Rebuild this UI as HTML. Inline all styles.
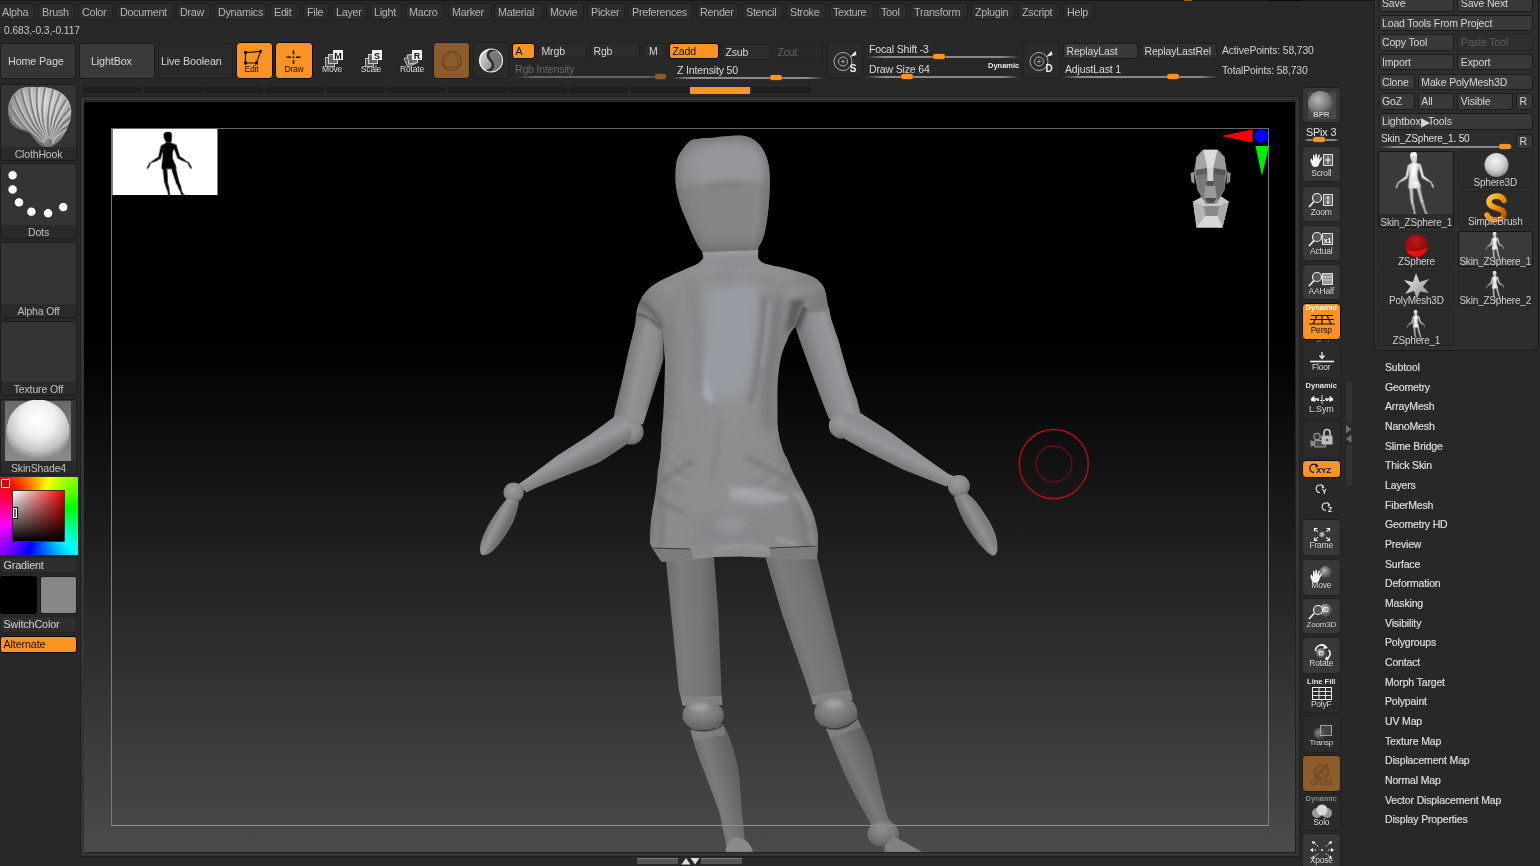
<!DOCTYPE html>
<html><head><meta charset="utf-8"><title>ZBrush</title>
<style>
*{box-sizing:border-box;margin:0;padding:0}
html,body{width:1540px;height:866px;overflow:hidden;background:#282828}
body{position:relative;font-family:"Liberation Sans",sans-serif;font-size:10.5px;letter-spacing:-0.15px;color:#c8c8c8;line-height:1;will-change:transform}
.a{position:absolute;white-space:nowrap}
.mi{position:absolute;top:3px;height:17px;border:1px solid #1f1f1f;border-radius:4px;background:#2c2c2c;color:#b4b4b4;font-size:10.8px;line-height:17px;padding-left:3px;letter-spacing:-0.3px;white-space:nowrap;overflow:hidden}
.btn{position:absolute;border:1px solid #1b1b1b;border-radius:3px;background:#393939;color:#d6d6d6;white-space:nowrap;overflow:hidden;padding-left:2.5px}
.sl{position:absolute;height:1.6px;margin-top:-1px;background:linear-gradient(90deg,rgba(150,150,150,0),#8a8a8a 12%,#8a8a8a 88%,rgba(150,150,150,0))}
.kn{position:absolute;height:5px;border-radius:2.5px;background:#fb9424;box-shadow:0 0 0 0.5px #6a4414;margin-top:-0.2px}
.tb{position:absolute;left:1302px;width:38.5px;height:35px;border:1px solid #202020;border-radius:4px;background:#383838}
.tl{position:absolute;left:0;width:100%;text-align:center;font-size:8.5px;color:#e4e4e4;letter-spacing:-0.2px;text-shadow:0 0 1px #000}
.sm{position:absolute;left:1385px;color:#e2e2e2;font-size:10.5px;white-space:nowrap;-webkit-text-stroke:0.2px #cfcfcf}
.lp{position:absolute;left:0;width:77px;border:1px solid #1c1c1c;border-radius:3px;background:#343434;overflow:hidden}
.lpl{position:absolute;left:0;bottom:0;width:100%;height:13px;background:#2a2a2a;color:#c0c0c0;text-align:center;font-size:10.5px;line-height:14px}
.tt{position:absolute;background:#2b2b2b;border:1px solid #262626;border-radius:3px}
.ttl{position:absolute;left:-4px;right:-4px;bottom:-1.5px;text-align:center;font-size:10px;color:#cfcfcf;line-height:12px;letter-spacing:-0.2px}
.or{background:#fb9424 !important;color:#111;border-color:#0c0c0c}
.dor{background:#8c5c2b !important;border-color:#1b1b1b}
</style></head><body>

<div class="mi" style="left:-2px;width:37px">Alpha</div>
<div class="mi" style="left:38px;width:37px">Brush</div>
<div class="mi" style="left:78px;width:35px">Color</div>
<div class="mi" style="left:116px;width:58px">Document</div>
<div class="mi" style="left:176px;width:35px">Draw</div>
<div class="mi" style="left:214px;width:53px">Dynamics</div>
<div class="mi" style="left:270px;width:30px">Edit</div>
<div class="mi" style="left:303px;width:26px">File</div>
<div class="mi" style="left:332px;width:35px">Layer</div>
<div class="mi" style="left:370px;width:32px">Light</div>
<div class="mi" style="left:405px;width:39px">Macro</div>
<div class="mi" style="left:448px;width:44px">Marker</div>
<div class="mi" style="left:494px;width:49px">Material</div>
<div class="mi" style="left:546px;width:38px">Movie</div>
<div class="mi" style="left:587px;width:38px">Picker</div>
<div class="mi" style="left:628px;width:65px">Preferences</div>
<div class="mi" style="left:696px;width:43px">Render</div>
<div class="mi" style="left:742px;width:41px">Stencil</div>
<div class="mi" style="left:786px;width:40px">Stroke</div>
<div class="mi" style="left:829px;width:45px">Texture</div>
<div class="mi" style="left:877px;width:30px">Tool</div>
<div class="mi" style="left:910px;width:58px">Transform</div>
<div class="mi" style="left:971px;width:44px">Zplugin</div>
<div class="mi" style="left:1018px;width:42px">Zscript</div>
<div class="mi" style="left:1063px;width:31px">Help</div>
<!-- coordinate readout -->
<div class="a" style="left:4px;top:25.500px;font-size:10.3px;color:#c6c6c6;letter-spacing:-0.1px">0.683<span style="color:#fb9424">,</span>-0.3<span style="color:#fb9424">,</span>-0.117</div>

<!-- big buttons -->
<div class="btn" style="left:0;top:43px;width:76px;height:36px;background:#363636;font-size:10.8px;line-height:34px;padding-left:7px">Home Page</div>
<div class="btn" style="left:79px;top:43px;width:76px;height:36px;background:#3a3a3a;font-size:10.8px;line-height:34px;padding-left:11px">LightBox</div>
<div class="btn" style="left:158px;top:43px;width:75px;height:36px;background:#2a2a2a;border-color:#202020;font-size:10.8px;line-height:34px;padding-left:2px">Live Boolean</div>

<div class="btn or" style="left:236px;top:42px;width:37px;height:37px;border-radius:4px;border-width:1.5px">
 <svg class="a" style="left:-2px;top:0" width="36" height="36" viewBox="0 0 36 36"><path d="M10.500 9.500 L25.500 8.500 L21.500 20 L10.500 20 Z" fill="none" stroke="#111" stroke-width="1.200"/><rect x="9" y="8" width="3" height="3" fill="#111"/><rect x="24.500" y="7" width="2.500" height="2.500" fill="#111"/><rect x="9" y="18.500" width="3" height="3" fill="#111"/><rect x="20" y="18.500" width="3" height="3" fill="#111"/></svg>
 <div class="tl" style="top:22px;left:-3px;color:#111;text-shadow:none;font-size:8.5px">Edit</div></div>
<div class="btn or" style="left:275px;top:42px;width:38px;height:37px;border-radius:4px;border-width:1.5px">
 <svg class="a" style="left:0;top:0" width="36" height="36" viewBox="0 0 36 36"><path d="M17.5 7.5v4 M17.5 17v4 M10.5 14.3h4.5 M20 14.3h4.5" stroke="#111" stroke-width="1.5" fill="none"/><rect x="16.6" y="13.4" width="1.8" height="1.8" fill="#111"/></svg>
 <div class="tl" style="top:22px;color:#111;text-shadow:none;font-size:8.5px">Draw</div></div>

<!-- Move / Scale / Rotate -->
<div class="a" style="left:316px;top:42px;width:32px;height:37px">
 <svg class="a" style="left:2px;top:3px" width="32" height="37" viewBox="0 0 32 37"><rect x="7.5" y="12.5" width="9" height="9" fill="#555" stroke="#bbb" stroke-width="1"/><rect x="10.5" y="9.500" width="9" height="9" fill="#666" stroke="#ccc" stroke-width="1"/><rect x="15" y="5" width="10" height="10" fill="#f0f0f0"/><text x="20" y="13.500" font-size="9" font-weight="bold" text-anchor="middle" fill="#111" font-family="Liberation Sans">M</text></svg>
 <div class="tl" style="top:23px">Move</div></div>
<div class="a" style="left:355px;top:42px;width:32px;height:37px">
 <svg class="a" style="left:2px;top:3px" width="32" height="37" viewBox="0 0 32 37"><rect x="8.5" y="13.500" width="8" height="8" fill="#555" stroke="#bbb" stroke-width="1"/><rect x="11.5" y="9.500" width="9" height="9" fill="#666" stroke="#ccc" stroke-width="1"/><rect x="15" y="5" width="10" height="10" fill="#f0f0f0"/><text x="20" y="13.500" font-size="9" font-weight="bold" text-anchor="middle" fill="#111" font-family="Liberation Sans">S</text></svg>
 <div class="tl" style="top:23px">Scale</div></div>
<div class="a" style="left:395px;top:42px;width:34px;height:37px">
 <svg class="a" style="left:1px;top:3px" width="34" height="37" viewBox="0 0 34 37"><g transform="rotate(-22 14 16)"><rect x="9.500" y="11.5" width="9" height="9" fill="#555" stroke="#bbb" stroke-width="1"/></g><g transform="rotate(-10 16 14)"><rect x="12" y="9.500" width="9" height="9" fill="#666" stroke="#ccc" stroke-width="1"/></g><rect x="16" y="5" width="10" height="10" fill="#f0f0f0"/><text x="21" y="13.500" font-size="9" font-weight="bold" text-anchor="middle" fill="#111" font-family="Liberation Sans">R</text></svg>
 <div class="tl" style="top:23px">Rotate</div></div>

<!-- gizmo + sculptris -->
<div class="btn dor" style="left:433px;top:42px;width:37px;height:37px;border-radius:4px">
 <svg class="a" style="left:0;top:0" width="35" height="35" viewBox="0 0 35 35"><circle cx="17.500" cy="18" r="9.500" fill="none" stroke="#6b4520" stroke-width="1.2"/><path d="M17.500 8.500 Q24 14 25.700 22.750 Q17.500 25.800 9.300 22.750 Q11 14 17.500 8.500 Z" fill="none" stroke="#6b4520" stroke-width="1"/></svg></div>
<div class="btn" style="left:473px;top:42px;width:36px;height:37px;background:#2b2b2b;border-color:#202020;border-radius:4px">
 <svg class="a" style="left:0;top:0" width="34" height="35" viewBox="0 0 34 35"><defs><linearGradient id="sg" x1="0" y1="0" x2="1" y2="1"><stop offset="0" stop-color="#e0e0e0"/><stop offset="0.6" stop-color="#a0a0a0"/><stop offset="1" stop-color="#6a6a6a"/></linearGradient><clipPath id="sgc"><circle cx="17" cy="17.500" r="11"/></clipPath></defs>
 <circle cx="17" cy="17.500" r="11.300" fill="url(#sg)" stroke="#f0f0f0" stroke-width="1.500"/>
 <g clip-path="url(#sgc)"><path d="M23 7 C16 5 11 11 16 16.500 C21 22 20 27 11 29 L30 32 L32 8 Z" fill="#6e6e6e" opacity="0.85"/>
 <path d="M23.500 7 C16 5 11 11 16 16.500 C21 22 20 27 10.500 29" fill="none" stroke="#2c2c2c" stroke-width="2.600" stroke-linecap="round"/></g></svg></div>

<!-- A Mrgb Rgb M Zadd Zsub Zcut -->
<div class="btn or" style="left:512px;top:43px;width:23px;height:16px;line-height:14px;font-size:10.6px">A</div>
<div class="btn" style="left:538px;top:43px;width:49px;height:16px;line-height:14px;background:#2c2c2c;border-color:#212121">Mrgb</div>
<div class="btn" style="left:590px;top:43px;width:50px;height:16px;line-height:14px;background:#2c2c2c;border-color:#212121">Rgb</div>
<div class="btn" style="left:643px;top:43px;width:23px;height:16px;line-height:14px;background:#2c2c2c;border-color:#212121;padding-left:5px">M</div>
<div class="btn or" style="left:669px;top:43px;width:50px;height:16px;line-height:14px;border-width:1.5px;font-size:10.6px">Zadd</div>
<div class="btn" style="left:722px;top:44px;width:49px;height:16px;line-height:15px;background:#2c2c2c;border-color:#212121">Zsub</div>
<div class="btn" style="left:774px;top:44px;width:49px;height:16px;line-height:14px;background:#292929;border-color:#242424;color:#666">Zcut</div>

<div class="a" style="left:515px;top:64px;color:#686868;font-size:10.5px">Rgb Intensity</div>
<div class="sl" style="left:515px;top:77px;width:152px;opacity:.6"></div>
<div class="kn" style="left:655px;top:74px;width:11px;background:#8e5c2a;border-color:#4a3418"></div>
<div class="a" style="left:677px;top:65px;color:#dcdcdc;font-size:10.5px">Z Intensity 50</div>
<div class="sl" style="left:672px;top:78px;width:152px"></div>
<div class="kn" style="left:770px;top:75px;width:12px"></div>

<!-- focal / draw size -->
<div class="btn" style="left:827px;top:42px;width:36px;height:37px;background:#2b2b2b;border-color:#212121;border-radius:4px">
 <svg class="a" style="left:0;top:0" width="34" height="35" viewBox="0 0 34 35"><circle cx="15" cy="18.5" r="9" fill="none" stroke="#aaa" stroke-width="1"/><circle cx="15" cy="18.5" r="4.5" fill="none" stroke="#aaa" stroke-width="1"/><path d="M15 16.500v4M13 18.500h4" stroke="#aaa" stroke-width="0.8"/><path d="M22 14 L27.500 8 L28.500 12 Z" fill="#eee"/><text x="25" y="29" font-size="10" font-weight="bold" text-anchor="middle" fill="#eee" font-family="Liberation Sans">S</text></svg></div>
<div class="a" style="left:869px;top:44px;color:#dcdcdc;font-size:10.5px">Focal Shift -3</div>
<div class="sl" style="left:866px;top:57px;width:154px"></div>
<div class="kn" style="left:933px;top:54px;width:12px"></div>
<div class="a" style="left:869px;top:64px;color:#dcdcdc;font-size:10.5px">Draw Size 64</div>
<div class="a" style="left:988px;top:62px;color:#e8e8e8;font-size:7.5px;font-weight:bold;letter-spacing:0">Dynamic</div>
<div class="sl" style="left:866px;top:77px;width:154px"></div>
<div class="kn" style="left:901px;top:74px;width:12px"></div>

<div class="btn" style="left:1023px;top:42px;width:37px;height:37px;background:#2b2b2b;border-color:#212121;border-radius:4px">
 <svg class="a" style="left:0;top:0" width="35" height="35" viewBox="0 0 35 35"><circle cx="15" cy="18.5" r="9" fill="none" stroke="#aaa" stroke-width="1"/><circle cx="15" cy="18.5" r="4.5" fill="none" stroke="#aaa" stroke-width="1"/><path d="M15 16.500v4M13 18.500h4" stroke="#aaa" stroke-width="0.8"/><path d="M22 14 L27.500 8 L28.500 12 Z" fill="#eee"/><text x="25" y="29" font-size="10" font-weight="bold" text-anchor="middle" fill="#eee" font-family="Liberation Sans">D</text></svg></div>
<div class="btn" style="left:1063px;top:43px;width:75px;height:16px;line-height:14px">ReplayLast</div>
<div class="btn" style="left:1141px;top:43px;width:76px;height:16px;line-height:14px;background:#303030;border-color:#202020">ReplayLastRel</div>
<div class="a" style="left:1065px;top:64px;color:#dcdcdc;font-size:10.5px">AdjustLast 1</div>
<div class="sl" style="left:1062px;top:77px;width:156px"></div>
<div class="kn" style="left:1167px;top:74px;width:12px"></div>
<div class="a" style="left:1222px;top:45.500px;color:#d2d2d2;font-size:10.4px">ActivePoints: 58,730</div>
<div class="a" style="left:1222px;top:65.700px;color:#d2d2d2;font-size:10.4px">TotalPoints: 58,730</div>
<div class="a" style="left:82.7px;top:87px;width:59px;height:6.3px;background:#1e1e1e"></div>
<div class="a" style="left:143.5px;top:87px;width:59px;height:6.3px;background:#1e1e1e"></div>
<div class="a" style="left:204.3px;top:87px;width:59px;height:6.3px;background:#1e1e1e"></div>
<div class="a" style="left:265.1px;top:87px;width:59px;height:6.3px;background:#1e1e1e"></div>
<div class="a" style="left:325.9px;top:87px;width:59px;height:6.3px;background:#1e1e1e"></div>
<div class="a" style="left:386.7px;top:87px;width:59px;height:6.3px;background:#1e1e1e"></div>
<div class="a" style="left:447.5px;top:87px;width:59px;height:6.3px;background:#1e1e1e"></div>
<div class="a" style="left:508.3px;top:87px;width:59px;height:6.3px;background:#1e1e1e"></div>
<div class="a" style="left:569.1px;top:87px;width:59px;height:6.3px;background:#1e1e1e"></div>
<div class="a" style="left:629.9px;top:87px;width:59px;height:6.3px;background:#1e1e1e"></div>
<div class="a" style="left:690.0px;top:87px;width:59.5px;height:6.5px;background:#fb9424"></div>
<div class="a" style="left:751.5px;top:87px;width:59px;height:6.3px;background:#1e1e1e"></div>
<div class="a" id="topline" style="left:0;top:0;width:1540px;height:1.300px;background:#171717"></div><div class="a" style="left:1184px;top:0;width:8px;height:1.300px;background:#9a5e18"></div><div class="a" style="left:1270px;top:0;width:33px;height:1.300px;background:#0a0806"></div>

<!-- ===== left shelf ===== -->
<div class="lp" style="top:83.500px;height:77.500px">
 <svg class="a" style="left:0;top:0" width="76" height="64" viewBox="0 0 76 64">
  <defs><radialGradient id="ch" cx="0.6" cy="0.25" r="0.85"><stop offset="0" stop-color="#d4d4d4"/><stop offset="0.5" stop-color="#a8a8a8"/><stop offset="1" stop-color="#666"/></radialGradient>
  <filter id="b1"><feGaussianBlur stdDeviation="0.75"/></filter>
  <clipPath id="chc"><path id="chp" d="M20.300 3.300 C23 2.300 25.500 2 27.700 1.900 L42.500 1.900 C47.500 2.500 52 3.800 55.500 5.200 C59 6.800 61.800 8.800 63.800 10.700 C66.500 13.500 68.300 17 69.300 20 C70.200 23 70.400 26.500 70.200 29.200 C70 33 69 37 67.500 40.300 C66 44.500 64 48.500 61.900 51.400 C59.500 55 56.500 58 53.600 59.700 C51 61.500 48.500 62.500 46.200 62.500 C43.500 62.300 41 61 38.800 59.700 C36.500 57.800 34.800 55.500 33.300 53.200 C31.500 51 29.800 49 27.700 47.700 C25 46 21.500 45 18.500 44 C15.500 43 13 41.500 11.100 39.400 C9 36.500 8 33 7.400 29.200 C7 26 7 23 7.400 20 C8.300 16.500 10 13 12 9.800 C14.500 6.800 17.500 4.500 20.300 3.300 Z"/></clipPath></defs>
  <use href="#chp" fill="url(#ch)"/>
  <g clip-path="url(#chc)">
   <g fill="none" stroke="#606060" stroke-width="1.600" filter="url(#b1)" opacity="0.7"><path d="M42.4 57.4 Q22.8 52.3 8.5 31.0"/><path d="M42.4 56.1 Q22.1 45.9 9.0 20.0"/><path d="M42.9 54.9 Q23.4 40.2 13.0 10.5"/><path d="M43.8 54.2 Q26.3 36.2 20.0 4.5"/><path d="M44.7 54.0 Q29.9 34.2 28.0 2.5"/><path d="M45.7 53.9 Q33.6 33.0 36.0 2.0"/><path d="M46.6 54.0 Q37.5 32.2 44.0 2.5"/><path d="M47.6 54.2 Q44.5 32.3 52.0 4.5"/><path d="M48.4 54.7 Q48.1 33.6 59.0 8.5"/><path d="M49.2 55.4 Q51.3 35.9 65.0 14.5"/><path d="M49.6 56.4 Q53.7 39.5 69.0 23.0"/><path d="M49.8 57.5 Q54.6 43.4 70.0 32.0"/><path d="M49.5 58.6 Q54.1 47.4 68.0 41.0"/></g>
   <g fill="none" stroke="#e8e8e8" stroke-width="1.400" filter="url(#b1)" opacity="0.5"><path d="M44.0 57.4 Q25.0 53.1 10.9 32.2"/><path d="M44.0 56.1 Q24.3 46.7 11.4 21.2"/><path d="M44.5 54.9 Q25.6 41.0 15.4 11.7"/><path d="M45.4 54.2 Q28.5 37.0 22.4 5.7"/><path d="M46.3 54.0 Q32.1 35.0 30.4 3.7"/><path d="M47.3 53.9 Q35.8 33.8 38.4 3.2"/><path d="M48.2 54.0 Q39.7 33.0 46.4 3.7"/><path d="M49.2 54.2 Q46.7 33.1 54.4 5.7"/><path d="M50.0 54.7 Q50.3 34.4 61.4 9.7"/><path d="M50.8 55.4 Q53.5 36.7 67.4 15.7"/><path d="M51.2 56.4 Q55.9 40.3 71.4 24.2"/><path d="M51.4 57.5 Q56.8 44.2 72.4 33.2"/><path d="M51.1 58.6 Q56.3 48.2 70.4 42.2"/></g>
   <path d="M7 30 C10 38 18 42 28 46 C34 50 38 58 46 62 L30 64 L4 44 Z" fill="#555" filter="url(#b1)" opacity="0.45"/>
  </g>
 </svg>
 <div class="lpl">ClothHook</div></div>

<div class="lp" style="top:163px;height:76px">
 <svg class="a" style="left:0;top:0" width="76" height="62" viewBox="0 0 76 62"><g fill="#fdfdfd" stroke="#1e1e1e" stroke-width="0.8">
  <circle cx="11.6" cy="11.3" r="4.7"/><circle cx="11.6" cy="25.5" r="4.7"/><circle cx="18" cy="38.4" r="4.7"/><circle cx="30.4" cy="47.7" r="4.7"/><circle cx="47.1" cy="49.2" r="4.7"/><circle cx="62.2" cy="43.1" r="4.7"/></g></svg>
 <div class="lpl">Dots</div></div>

<div class="lp" style="top:242px;height:76px"><div class="lpl">Alpha Off</div></div>
<div class="lp" style="top:321px;height:75px"><div class="lpl">Texture Off</div></div>

<div class="lp" style="top:399px;height:76px">
 <div class="a" style="left:4px;top:1px;width:66px;height:60px;background:linear-gradient(#6a6a6a,#8a8a8a)"></div>
 <svg class="a" style="left:0;top:0" width="76" height="62" viewBox="0 0 76 62"><defs><radialGradient id="ms" cx="0.5" cy="0.32" r="0.62"><stop offset="0" stop-color="#ffffff"/><stop offset="0.45" stop-color="#f0f0f0"/><stop offset="0.8" stop-color="#c4c4c4"/><stop offset="1" stop-color="#8c8c8c"/></radialGradient></defs><circle cx="37" cy="31" r="31.5" fill="url(#ms)"/></svg>
 <div class="lpl">SkinShade4</div></div>

<!-- colour picker -->
<div class="a" style="left:0;top:477px;width:78px;height:78px;background:conic-gradient(from 315deg,#ff0000,#ffff00 16.66%,#00ff00 33.33%,#00ffff 50%,#0000ff 66.66%,#ff00ff 83.33%,#ff0000)"></div>
<div class="a" style="left:12px;top:490px;width:53px;height:52px;background:linear-gradient(rgba(0,0,0,0),#000),linear-gradient(90deg,#fff,#f00000);border:1px solid #333"></div>
<div class="a" style="left:1px;top:479px;width:9px;height:9px;background:#d80000;border:1px solid #eee;border-radius:1px"></div>
<div class="a" style="left:12.500px;top:508px;width:4px;height:10px;border:1px solid #fff;background:#666;outline:1px solid #000"></div>

<div class="btn" style="left:0;top:557px;width:77px;height:16px;line-height:14px;background:#2e2e2e;border-color:#232323;font-size:10.8px">Gradient</div>
<div class="a" style="left:0;top:576px;width:37px;height:38px;background:#000;border-radius:3px"></div>
<div class="a" style="left:40px;top:576px;width:37px;height:38px;background:#878787;border:1px solid #1c1c1c;border-radius:3px"></div>
<div class="btn" style="left:0;top:616px;width:77px;height:17px;line-height:15px;background:#2e2e2e;border-color:#232323;font-size:10.8px">SwitchColor</div>
<div class="btn or" style="left:0;top:636px;width:77px;height:17px;line-height:14.500px;font-size:10.8px">Alternate</div>

<!-- ===== canvas ===== -->
<div class="a" style="left:80px;top:96px;width:1220px;height:761px;background:#343434;border:1px solid #1f1f1f;box-shadow:inset 0 0 0 3px #343434, inset 0 0 0 4.5px #222"></div>
<div class="a" id="cv" style="left:84.200px;top:101.800px;width:1210.800px;height:750px;background:linear-gradient(180deg,#000 0,#000 30%,#020202 33.500%,#070707 38%,#121212 48%,#202020 60%,#2e2e2e 73%,#3c3c3c 86%,#4b4b4b 100%)"></div>
<svg class="a" style="left:84.500px;top:102px" width="1210.500" height="750" viewBox="84.500 102 1210.500 750">
<defs>
 <filter id="bl2" filterUnits="userSpaceOnUse" x="450" y="120" width="580" height="740"><feGaussianBlur stdDeviation="2"/></filter>
 <filter id="bl4" filterUnits="userSpaceOnUse" x="450" y="120" width="580" height="740"><feGaussianBlur stdDeviation="4"/></filter>
 <filter id="bl8" filterUnits="userSpaceOnUse" x="450" y="120" width="580" height="740"><feGaussianBlur stdDeviation="8"/></filter>
 <linearGradient id="gLua" gradientUnits="userSpaceOnUse" x1="628" y1="350" x2="665" y2="358"><stop offset="0" stop-color="#77787a"/><stop offset="0.35" stop-color="#919294"/><stop offset="0.75" stop-color="#8a8b8d"/><stop offset="1" stop-color="#6e6f71"/></linearGradient>
 <linearGradient id="gRua" gradientUnits="userSpaceOnUse" x1="806" y1="368" x2="846" y2="356"><stop offset="0" stop-color="#6f7072"/><stop offset="0.4" stop-color="#8d8e91"/><stop offset="0.75" stop-color="#96989b"/><stop offset="1" stop-color="#7a7b7d"/></linearGradient>
 <linearGradient id="gLfa" gradientUnits="userSpaceOnUse" x1="560" y1="450" x2="572" y2="472"><stop offset="0" stop-color="#8d8e91"/><stop offset="0.4" stop-color="#97999c"/><stop offset="1" stop-color="#6e6f71"/></linearGradient>
 <linearGradient id="gRfa" gradientUnits="userSpaceOnUse" x1="905" y1="444" x2="893" y2="468"><stop offset="0" stop-color="#8c8d90"/><stop offset="0.4" stop-color="#95979a"/><stop offset="1" stop-color="#6e6f71"/></linearGradient>
 <linearGradient id="gLth" gradientUnits="userSpaceOnUse" x1="668" y1="620" x2="720" y2="618"><stop offset="0" stop-color="#6e6e70"/><stop offset="0.25" stop-color="#7c7c7e"/><stop offset="0.65" stop-color="#767678"/><stop offset="1" stop-color="#5e5e60"/></linearGradient>
 <linearGradient id="gRth" gradientUnits="userSpaceOnUse" x1="780" y1="626" x2="833" y2="610"><stop offset="0" stop-color="#68686a"/><stop offset="0.3" stop-color="#7b7b7d"/><stop offset="0.7" stop-color="#747476"/><stop offset="1" stop-color="#5c5c5e"/></linearGradient>
 <linearGradient id="gLca" gradientUnits="userSpaceOnUse" x1="700" y1="780" x2="737" y2="770"><stop offset="0" stop-color="#6a6a6c"/><stop offset="0.35" stop-color="#7c7c7e"/><stop offset="1" stop-color="#606062"/></linearGradient>
 <linearGradient id="gRca" gradientUnits="userSpaceOnUse" x1="845" y1="785" x2="880" y2="768"><stop offset="0" stop-color="#646466"/><stop offset="0.4" stop-color="#79797b"/><stop offset="1" stop-color="#5e5e60"/></linearGradient>
 <linearGradient id="gLh" gradientUnits="userSpaceOnUse" x1="489.500" y1="523" x2="504.500" y2="531"><stop offset="0" stop-color="#7a7b7d"/><stop offset="0.4" stop-color="#949598"/><stop offset="1" stop-color="#68696b"/></linearGradient>
 <linearGradient id="gRh" gradientUnits="userSpaceOnUse" x1="969.500" y1="530.500" x2="984.500" y2="522"><stop offset="0" stop-color="#68696b"/><stop offset="0.55" stop-color="#909194"/><stop offset="1" stop-color="#7c7d7f"/></linearGradient>
 <radialGradient id="gBall" cx="0.45" cy="0.35" r="0.65"><stop offset="0" stop-color="#9a9c9f"/><stop offset="0.6" stop-color="#88898b"/><stop offset="1" stop-color="#6a6a6c"/></radialGradient>
 <radialGradient id="gKnee" cx="0.45" cy="0.3" r="0.7"><stop offset="0" stop-color="#8f9093"/><stop offset="0.55" stop-color="#7a7a7c"/><stop offset="1" stop-color="#5c5c5e"/></radialGradient>
 <linearGradient id="gHead" gradientUnits="userSpaceOnUse" x1="0" y1="136" x2="0" y2="252"><stop offset="0" stop-color="#8c8d8f"/><stop offset="0.2" stop-color="#929396"/><stop offset="0.42" stop-color="#8d8e91"/><stop offset="0.48" stop-color="#838486"/><stop offset="0.8" stop-color="#858688"/><stop offset="1" stop-color="#7c7d7f"/></linearGradient>
 <clipPath id="cHead"><use href="#pHead"/></clipPath>
 <linearGradient id="gTor" gradientUnits="userSpaceOnUse" x1="640" y1="400" x2="828" y2="400"><stop offset="0" stop-color="#7c7d7f"/><stop offset="0.15" stop-color="#8b8c8e"/><stop offset="0.5" stop-color="#8f9092"/><stop offset="0.8" stop-color="#898a8c"/><stop offset="1" stop-color="#77787a"/></linearGradient>
 <clipPath id="cTor"><path id="pTor" d="M703 256 L757.500 254 L757.600 261.300 C765 264 772 265.500 780.200 266.900 C790 269 798 271.500 805.600 273.900 C812 276 816.500 278.500 819.500 281.900 C823 285.500 824.500 288.500 825.200 292.300 L827.600 306.200 L800 328 L796.400 324.700 C791 330 788 335 786.600 340 C783 348 781 354 779.700 360.800 C778 370 777.200 380 776.900 388.500 L776.900 423.100 C777.500 432 778.800 438 780.400 443.900 C782 450 784 455 786.200 457.800 C790 468 795 478 800.100 487.800 C804 495 808 503 811.600 510.900 C814.500 519 816.500 527 817.400 534 L817.400 550.200 L816.200 559.400 L763.100 557.600 L740 556.400 L714.100 557.100 L688.700 559.400 L661 561.700 L651.700 547.900 L649.400 543.200 C649.500 535 650 527 650.600 520.100 C652 510 654 501 655.200 492.400 C656.200 485 657 477 657.500 469.300 L659.300 460 C660.500 451 661 443 661 434.700 C662 425 663 415 663.300 406 C664 390 664.500 375 664.500 360 L663 340 L661 327 L640 322 L635.800 313.100 C636.500 308 638 303.500 640.400 299.300 C643 294 646.500 290 651.200 286.300 C656 282.500 661.500 279.500 667.800 276.900 C675 273.500 682 270.500 688.600 267.600 C694 265.500 699 263 703.100 261.300 Z"/></clipPath>
</defs>

<g id="fig">
 <!-- ===== legs ===== -->
 <path d="M665.200 558 L713.400 556 L717.900 615.300 L720.900 690.600 L722 705 L682 705 L678.400 690.600 L670.800 615.300 Z" fill="url(#gLth)"/>
 <path d="M765 558 L815.800 553 L830.800 615.300 L848.900 686.800 L851 702 L812 704 L808.300 690.600 L781.900 615.300 Z" fill="url(#gRth)"/>
 <!-- calves -->
 <path d="M689.700 729 C693 743 698 758 703.700 771.300 C708.500 785 714 799 718.900 811.900 L727 851.700 L751.800 851.700 C748 846 745.500 843 744.300 840.400 L741.300 811.900 C740.500 797 739.500 784 738.200 771.300 C735.500 758 732 746 728 734.700 L722.400 724 Z" fill="url(#gLca)"/>
 <path d="M825.200 728 C831 743 837 757 842.900 771.300 C851 789 860 806 869.300 822.100 L872 832 L895 826 L887.600 818 C885 809 882.500 800 880.500 791.600 C877.500 778 874.500 764 871.300 751 C867 739 862 728 856 716.400 Z" fill="url(#gRca)"/>
 <!-- thigh-end rings -->
 <path d="M680.500 697 L721.300 696 L722 705 L682 706 Z" fill="#88898b" opacity="0.7"/>
 <path d="M810.500 696 L850.300 690 L852.500 700 L813.500 705 Z" fill="#88898b" opacity="0.7"/>
 <!-- calf-top rings -->
 <path d="M690 730 L723 726 L725.500 735 L692.500 740 Z" fill="#88898b" opacity="0.55"/>
 <path d="M826 729 L857 718 L860.500 727 L830 738.500 Z" fill="#88898b" opacity="0.55"/>
 <!-- knees -->
 <ellipse cx="702.600" cy="715.400" rx="20.700" ry="15.800" fill="url(#gKnee)"/>
 <ellipse cx="835.300" cy="712.500" rx="21.500" ry="17.200" fill="url(#gKnee)"/>
 <ellipse cx="699" cy="707" rx="10" ry="4" fill="#a3a6aa" filter="url(#bl2)" opacity="0.8"/>
 <ellipse cx="833" cy="703.500" rx="10" ry="4" fill="#a3a6aa" filter="url(#bl2)" opacity="0.8"/>
 <path d="M688 727.500 C696 732.500 712 732 722 725.500" fill="none" stroke="#2e2e30" stroke-width="1.300" opacity="0.8"/>
 <path d="M822 726 C832 732 848 728 857 718.500" fill="none" stroke="#2e2e30" stroke-width="1.300" opacity="0.8"/>
 <!-- ankle + foot (right) -->
 <path d="M884 836 L921.200 851.700 L884 851.700 Z" fill="#7a7a7c"/>
 <ellipse cx="882.800" cy="834" rx="16" ry="13" fill="url(#gKnee)"/>
 <path d="M893 836 L921.200 851.700 L888 851.700 L884 846 Z" fill="#808082"/>
 <!-- left ankle blob -->
 <path d="M725 851.700 C726 842 732 836 740 838 C747 840 751 846 752.500 851.700 Z" fill="#8a8a8c"/>

 <!-- ===== torso ===== -->
 <use href="#pTor" fill="url(#gTor)"/>
 <g clip-path="url(#cTor)">
  <!-- back highlight -->
  <path d="M705 287 C722 282 745 281 761 284 L759 300 C758 320 755 345 752 362 C751 375 750 385 746 394 C742 400 735 401 725 401 C716 402 710 404 706 404 C703 395 702.500 388 703 380 L703 350 L704.500 320 Z" fill="#999da4" filter="url(#bl4)" opacity="0.7"/>
  <path d="M707 292 C722 288 743 287 757 290 C756 315 753 340 749 360 C747 372 744 382 738 388 C728 392 716 394 708 396 C706 385 706 370 706.500 350 Z" fill="#9b9fa6" filter="url(#bl2)" opacity="0.45"/>
  <path d="M705 350 C707 370 708 385 712 398 C706 402 704 396 703 388 Z" fill="#a6aab2" filter="url(#bl2)" opacity="0.9"/>
  <path d="M703 392 C705 398 709 402 714 400" fill="none" stroke="#b0b4bb" stroke-width="2" filter="url(#bl2)" opacity="0.9"/>
  <!-- streaks right of highlight -->
  <path d="M764 296 C764 320 760 345 757 365 C755 380 753 392 750 402" fill="none" stroke="#6f7074" stroke-width="3" filter="url(#bl2)" opacity="0.85"/>
  <path d="M769 302 C768 325 765 348 762 368" fill="none" stroke="#a2a5ab" stroke-width="2.500" filter="url(#bl2)" opacity="0.8"/>
  <path d="M778 298 C777 325 771 352 768 378 C766 398 766 415 768 432" fill="none" stroke="#6b6c70" stroke-width="6" filter="url(#bl4)" opacity="0.85"/>
  <path d="M791 299 L804 299 L795 326 L784 334 Z" fill="#55565a" filter="url(#bl2)" opacity="0.85"/>
  <path d="M786 296 C796 292 808 290 820 286" fill="none" stroke="#9c9ea3" stroke-width="5" filter="url(#bl4)" opacity="0.7"/>
  <!-- left shoulder / side shading -->
  <path d="M690 286 C694 318 697 350 698 384" fill="none" stroke="#7e7f83" stroke-width="5" filter="url(#bl4)" opacity="0.6"/>
  <path d="M668 300 C672 330 672 370 670 420" fill="none" stroke="#77787b" stroke-width="6" filter="url(#bl4)" opacity="0.6"/>
  <path d="M636 300 C646 304 656 314 662 328" fill="none" stroke="#5c5d60" stroke-width="5" filter="url(#bl2)" opacity="0.8"/>
  <path d="M648 286 C656 284 664 286 672 292" fill="none" stroke="#97999d" stroke-width="5" filter="url(#bl4)" opacity="0.6"/>
  <!-- shoulder top light -->
  <path d="M690 272 C715 264 750 264 790 276" fill="none" stroke="#96979b" stroke-width="8" filter="url(#bl4)" opacity="0.7"/>
  <path d="M727 262 C725 272 724 280 724 286" fill="none" stroke="#85868a" stroke-width="5" filter="url(#bl4)" opacity="0.6"/>
  <!-- lower back shading + wrinkles -->
  <path d="M668 420 C700 440 750 440 778 422 L790 470 C750 482 700 482 658 470 Z" fill="#8b8c8e" filter="url(#bl8)" opacity="0.7"/>
  <g fill="none" stroke="#77787b" stroke-width="1.600" filter="url(#bl2)" opacity="0.8">
   <path d="M664 440 C670 452 678 460 690 466"/><path d="M662 456 C668 466 676 474 686 478"/><path d="M660 470 C665 480 672 488 680 492"/>
   <path d="M780 440 C776 452 768 462 756 470"/><path d="M786 458 C780 470 770 478 760 484"/><path d="M792 474 C786 484 778 492 768 496"/>
   <path d="M720 420 C718 440 716 460 712 480"/>
  </g>
  <g fill="none" stroke="#a3a5aa" stroke-width="1.600" filter="url(#bl2)" opacity="0.8">
   <path d="M667 446 C673 458 682 466 692 470"/><path d="M664 462 C670 472 678 480 688 484"/>
   <path d="M777 446 C772 458 764 466 752 474"/><path d="M783 464 C777 476 768 484 758 490"/>
  </g>
  <!-- skirt highlights -->
  <path d="M728 488 C748 484 772 490 790 498 C776 506 748 506 730 500 Z" fill="#a6a9ae" filter="url(#bl2)" opacity="0.75"/>
  <path d="M690 520 C720 510 760 512 792 524 C782 546 720 550 690 542 Z" fill="#858689" filter="url(#bl8)" opacity="0.9"/>
  <path d="M715 549 C735 545 755 546 770 551" fill="none" stroke="#9c9ea2" stroke-width="4" filter="url(#bl2)" opacity="0.9"/>
  <path d="M653 500 C657 520 655 540 653 548" fill="none" stroke="#9c9ea2" stroke-width="3" filter="url(#bl2)" opacity="0.8"/>
  <path d="M798 492 C806 512 811 532 814 547" fill="none" stroke="#a3a5a9" stroke-width="4" filter="url(#bl2)" opacity="0.85"/>
  <path d="M790 500 C794 515 800 530 806 545" fill="none" stroke="#707174" stroke-width="2" filter="url(#bl2)" opacity="0.7"/>
  <path d="M660 495 C664 512 662 530 660 546" fill="none" stroke="#707174" stroke-width="2" filter="url(#bl2)" opacity="0.7"/>
  <g fill="none" stroke="#b4b8be" stroke-width="2.200" filter="url(#bl2)" opacity="0.75">
   <path d="M793 490 C798 498 803 508 807 518"/><path d="M800 494 C805 503 809 512 812 522"/><path d="M776 538 C784 541 791 543 797 546"/><path d="M736 493 C744 491 752 493 760 497"/>
  </g>
  <g fill="none" stroke="#5e5f62" stroke-width="2" filter="url(#bl2)" opacity="0.7">
   <path d="M662 482 C670 474 680 468 692 462"/><path d="M746 458 C760 464 774 472 788 480"/><path d="M660 500 C668 506 676 510 684 512"/><path d="M797 500 C801 510 805 520 808 532"/>
  </g>
  <path d="M713 520 C724 515 738 515 748 520 C746 538 716 540 713 520 Z" fill="#999b9f" filter="url(#bl4)" opacity="0.7"/>
  <!-- hem -->
  <path d="M652 548 L690 549 L693 559 L661 562 Z" fill="#7a7b7d"/>
  <path d="M652 548 L690 549" stroke="#3a3a3c" stroke-width="1"/>
  <path d="M769 548 L817 546 L816 559 L770 558 Z" fill="#7b7c7e"/>
  <path d="M769 548 L817 546" stroke="#3a3a3c" stroke-width="1"/>
  <!-- edge shade -->
  <path d="M664 330 C666 400 660 470 650 545" fill="none" stroke="#707173" stroke-width="6" filter="url(#bl4)" opacity="0.8"/>
  <path d="M792 328 C776 370 776 420 786 458 C800 490 815 520 818 550" fill="none" stroke="#707173" stroke-width="6" filter="url(#bl4)" opacity="0.8"/>
 </g>

 <!-- ===== arms ===== -->
 <path d="M823 298 L829.500 311 L821 313 Z" fill="#7b7c7e"/>
 <!-- upper -->
 <path d="M635.800 313.100 C645 313.500 654 319.500 661 327 L663 340 L662.700 360 L646.600 412 L642.500 424.500 L613.200 417.500 L615 407.900 L621.900 380.100 L627.700 352.400 L634.700 324.700 Z" fill="url(#gLua)"/>
 <path d="M827.600 305.500 L827.200 307.500 C818 311.500 810 309.500 802.700 306.200 L794.600 325.800 L799.100 340 L811.600 374.600 L824.700 409.300 L828.500 419 L860 413.500 L856.600 399.600 L847.600 374.600 L837.900 340 L831 320 Z" fill="url(#gRua)"/>
 <clipPath id="cLua"><path d="M635.800 313.100 C645 313.500 654 319.500 661 327 L663 340 L662.700 360 L646.600 412 L613.700 414.300 L627.700 352.400 L634.700 324.700 Z"/></clipPath>
 <clipPath id="cRua"><path d="M827.600 305.500 L827.200 307.500 C818 311.500 810 309.500 802.700 306.200 L794.600 325.800 L799.100 340 L824.700 409.300 L858.700 409.300 L837.900 340 L831 320 Z"/></clipPath>
 <g clip-path="url(#cLua)"><path d="M634 311 C645 312 655 318 663 328" fill="none" stroke="#454648" stroke-width="6" filter="url(#bl2)" opacity="0.85"/><path d="M664 332 L662 365 L648 410" fill="none" stroke="#5a5b5d" stroke-width="5" filter="url(#bl2)" opacity="0.6"/></g>
 <g clip-path="url(#cRua)"><path d="M804 303 L794 328" fill="none" stroke="#4a4b4d" stroke-width="10" filter="url(#bl2)" opacity="0.85"/><path d="M803 305 C810 309 818 311 827 307" fill="none" stroke="#5c5d5f" stroke-width="4" filter="url(#bl2)" opacity="0.7"/></g>
 <!-- elbow balls -->
 <circle cx="630.500" cy="432" r="12.600" fill="url(#gBall)"/>
 <circle cx="841.500" cy="425.500" r="13.200" fill="url(#gBall)"/>
 <!-- forearms -->
 <path d="M614.200 416.600 C618 415 624 417 628 422 C633 428 632 438 624.600 445.500 L598.600 462.400 L564 476.200 L538.500 486.600 L525.800 492.400 L517.800 484.300 L529.300 476.200 L557 455.400 L589.400 434.700 Z" fill="url(#gLfa)"/>
 <path d="M860.800 413.400 C856 411 849 413 845 418 C840 425 840 434 845.500 439.800 L869.400 453.100 L901.700 469.300 L931.700 480.900 L945.600 486.600 L957.200 477.400 L947.900 473.900 L924.800 457.800 L890.200 432.300 Z" fill="url(#gRfa)"/>
 <!-- wrist balls -->
 <circle cx="513.100" cy="492.600" r="10.200" fill="url(#gBall)"/>
 <circle cx="958.300" cy="486" r="11" fill="url(#gBall)"/>
 <!-- hands -->
 <path d="M507 498.500 C503 502 495 513 488.500 524 C483.500 533 480 541.500 479.500 548 C479.300 553 481 555.800 483.300 555.300 C486.500 554.800 489 553.500 491 552 C495.500 548 500 542.500 503.500 537.500 C508 531 511.500 525 513.500 520 C516 513.500 517.500 507.500 518.500 502 Z" fill="url(#gLh)"/>
 <path d="M953 497 C955.500 503 957.500 509 960 514.500 C963 521 966 526.500 970 532 C974 538.500 978.500 544 983 548.500 C986 551.500 988.500 554 991 555.200 C994 556.200 996 554.500 996.800 550.500 C997.300 545.500 996.700 541 995.500 536.300 C993.300 529 989.500 522 985.200 515.500 C981 508.500 976.500 502.500 971.500 497.500 L966 493 Z" fill="url(#gRh)"/>

 <!-- ===== neck + head ===== -->
 <path d="M701.500 250 L757.500 247 L757.600 258 C760 262 764 264 768 266 L690 268 C696 265 700 262 703 258 Z" fill="#8e8f92"/>
 <path d="M703 254 L757 251.500" stroke="#a6a8ac" stroke-width="2.500" filter="url(#bl2)"/>
 <path id="pHead" d="M691.700 139.700 C698 138.300 706 138 713.500 137.700 C722 136.500 730 135.800 738.500 135.600 C744 135.600 749 137 753 139.700 C757.500 142.500 761 146.500 763.400 151.200 C766 156 767.800 162 768.600 167.800 C769.300 175 769.400 182 769.200 188.600 C769 196 768.500 204 767.600 211.400 C766.800 218 765.800 225 764.400 232.200 C763 238 761 243 758.200 246.800 L757.200 249.900 L702.100 252 C699.500 249 697.500 246 695.900 242.600 C692.500 236 689.500 229 686.500 221.800 C683.500 215 681 209 679.200 203.100 C677 196 675.500 189 675.100 182.300 C674.800 175 675 168 676.100 161.600 C677.500 156.500 679.500 152.500 682.400 149.100 C685 145 688 142 691.700 139.700 Z" fill="url(#gHead)"/>
 <g clip-path="url(#cHead)">
  <use href="#pHead" fill="none" stroke="#636466" stroke-width="7" filter="url(#bl4)" opacity="0.75"/>
  <path d="M702 148 C716 143 742 142 756 148 C761 158 761 170 759 182 C742 178 716 180 699 186 C695 174 696 160 702 148 Z" fill="#999a9e" filter="url(#bl4)" opacity="0.7"/>
  <path d="M680 190 C705 184 742 182 768 187" fill="none" stroke="#7a7b7e" stroke-width="2.500" filter="url(#bl2)" opacity="0.7"/>
  <path d="M708 186 C720 184 735 184 742 186" fill="none" stroke="#77787b" stroke-width="3" filter="url(#bl2)" opacity="0.7"/>
  <path d="M689 192 C692 212 699 230 706 246" fill="none" stroke="#7c7d80" stroke-width="3" filter="url(#bl2)" opacity="0.5"/>
  <path d="M757 190 C757 212 754 230 750 246" fill="none" stroke="#909194" stroke-width="3" filter="url(#bl2)" opacity="0.5"/>
 </g>
</g>
</svg>

<!-- frame line + overlays -->
<div class="a" style="left:110.500px;top:127.500px;width:1158.500px;height:698.500px;border:1px solid #7c7c7c;border-top-color:#666;border-bottom-color:#909090"></div>
<svg class="a" style="left:84.500px;top:102px" width="1210.500" height="750" viewBox="84.500 102 1210.500 750">
 <!-- thumbnail -->
 <rect x="112" y="129" width="105" height="66" fill="#fff"/>
 <defs><filter id="blk" x="0" y="0" width="100%" height="100%"><feColorMatrix type="matrix" values="0 0 0 0 0  0 0 0 0 0  0 0 0 0 0  0 0 0 1 0"/></filter></defs>
 <svg x="112" y="129" width="105" height="66" viewBox="84.500 102 1210.500 750" preserveAspectRatio="none"><use href="#fig" filter="url(#blk)"/></svg>

 <!-- cam head -->
 <g>
  <path d="M1192.500 201.500 L1203 196 L1220 196 L1228.300 201.500 L1222 227.600 L1196 227.600 Z" fill="#c9c9c9"/>
  <path d="M1192.500 201.500 L1203 206 L1205 216 L1196 227.600 Z" fill="#b5b5b5"/>
  <path d="M1228.300 201.500 L1219 206 L1217 216 L1222 227.600 Z" fill="#aaaaaa"/>
  <path d="M1203 206 L1219 206 L1217 216 L1205 216 Z" fill="#8a8a8a"/>
  <path d="M1205 216 L1217 216 L1222 227.600 L1196 227.600 Z" fill="#d8d8d8"/>
  <path d="M1202.600 149.700 L1217.200 149.700 L1224 157 L1226.500 172 L1224 190 L1216 204 L1205 204 L1197 190 L1193.500 172 L1196 157 Z" fill="#8e8e8e"/>
  <path d="M1202.600 149.700 L1217.200 149.700 L1213 168 L1206.500 168 Z" fill="#dcdcdc"/>
  <path d="M1196 157 L1202.600 149.700 L1206.500 168 L1195 170 Z" fill="#a4a4a4"/>
  <path d="M1224 157 L1217.200 149.700 L1213 168 L1225.500 170 Z" fill="#989898"/>
  <path d="M1195 170 L1206.500 168 L1207 174 L1196 176 Z" fill="#5e5e5e"/>
  <path d="M1225.500 170 L1213 168 L1212.500 174 L1224.500 176 Z" fill="#555"/>
  <path d="M1206.500 168 L1213 168 L1212.500 181 L1207 181 Z" fill="#d0d0d0"/>
  <path d="M1205 181 L1214.500 181 L1213 186 L1206.500 186 Z" fill="#555"/>
  <path d="M1196 176 L1207 174 L1205 186 L1203 200 L1197 190 Z" fill="#7a7a7a"/>
  <path d="M1224.500 176 L1212.500 174 L1214.500 186 L1217 200 L1224 190 Z" fill="#6a6a6a"/>
  <path d="M1205 186 L1214.500 186 L1216 198 L1203.500 198 Z" fill="#9a9a9a"/>
  <path d="M1204 198 L1216 198 L1213 203 L1207 203 Z" fill="#4c4c4c"/>
  <path d="M1190 173 L1193.500 172 L1194 184 L1191 182 Z" fill="#9a9a9a"/>
  <path d="M1230.300 173 L1226.500 172 L1226 184 L1229.500 182 Z" fill="#8a8a8a"/>
 </g>
 <!-- brush cursor -->
 <circle cx="1053.300" cy="464" r="34.500" fill="none" stroke="#b40f14" stroke-width="1.400"/>
 <circle cx="1053.300" cy="464" r="18" fill="none" stroke="#641014" stroke-width="1.300"/>
 <!-- axis gizmo -->
 <path d="M1221 136 L1252 129.500 L1252 142.500 Z" fill="#ff0000"/>
 <circle cx="1261" cy="136" r="7" fill="#0000ff"/>
 <path d="M1255 146 L1268.500 146 L1261.500 176 Z" fill="#00ee00"/>
</svg>

<div class="tb " style="top:86.5px;height:36px;"><svg class="a" style="left:0.5px;top:0.5px" width="35" height="33" viewBox="0 0 35 33"><defs><radialGradient id="bp" cx="0.4" cy="0.35" r="0.7"><stop offset="0" stop-color="#b8b8b8"/><stop offset="0.6" stop-color="#7a7a7a"/><stop offset="1" stop-color="#444"/></radialGradient></defs><rect x="4" y="4" width="28" height="27" fill="#484848"/><circle cx="16.500" cy="15.500" r="12.500" fill="url(#bp)"/></svg><div class="tl" style="top:23.5px;font-weight:bold;font-size:8px;color:#cfcfcf">BPR</div></div>
<div class="a" style="left:1306px;top:127px;font-size:10.8px;color:#e0e0e0">SPix 3</div>
<div class="sl" style="left:1304px;top:140px;width:35px"></div><div class="kn" style="left:1313px;top:137px;width:12px"></div>
<div class="tb " style="top:146.0px;height:36px;"><svg class="a" style="left:0.5px;top:0.5px" width="35" height="33" viewBox="0 0 35 33"><path d="M8 17 C6 13 6 11 7.500 10.500 L9 13 L9 7.500 C9 6.500 10.500 6.500 10.500 7.500 L11 11 L11.500 6.500 C11.500 5.500 13 5.500 13 6.500 L13.300 11 L14.500 7 C14.800 6 16 6.300 15.800 7.300 L15 12 L17 9.500 C17.600 8.800 18.600 9.500 18 10.300 L15.500 15 C15 17.500 13.500 19 11 19 C9.500 19 8.500 18.200 8 17 Z" fill="#f4f4f4"/><rect x="19.500" y="6.500" width="9" height="11" fill="#666" stroke="#ddd" stroke-width="1"/><path d="M24 8.500v7M21 12h6" stroke="#fff" stroke-width="1"/></svg><div class="tl" style="top:21.5px;">Scroll</div></div>
<div class="tb " style="top:185.5px;height:36px;"><svg class="a" style="left:0.5px;top:0.5px" width="35" height="33" viewBox="0 0 35 33"><circle cx="13" cy="11" r="4.500" fill="#555" stroke="#eee" stroke-width="1.2"/><path d="M10 14.500 L5 20" stroke="#eee" stroke-width="1.8"/><rect x="19.500" y="7.500" width="9" height="11" fill="#666" stroke="#ddd" stroke-width="1"/><path d="M24 9.500v7M22 11.500l2-2 2 2M22 14.500l2 2 2-2" stroke="#fff" stroke-width="1" fill="none"/></svg><div class="tl" style="top:21.5px;">Zoom</div></div>
<div class="tb " style="top:224.5px;height:36px;"><svg class="a" style="left:0.5px;top:0.5px" width="35" height="33" viewBox="0 0 35 33"><circle cx="13" cy="11" r="4.500" fill="#555" stroke="#eee" stroke-width="1.2"/><path d="M10 14.500 L5 20" stroke="#eee" stroke-width="1.8"/><rect x="18.500" y="7.500" width="10" height="11" fill="#666" stroke="#ddd" stroke-width="1"/><text x="23.500" y="16.500" font-size="7" font-weight="bold" fill="#fff" text-anchor="middle" font-family="Liberation Sans">x1</text></svg><div class="tl" style="top:21.5px;">Actual</div></div>
<div class="tb " style="top:264.0px;height:36px;"><svg class="a" style="left:0.5px;top:0.5px" width="35" height="33" viewBox="0 0 35 33"><circle cx="13" cy="11" r="4.500" fill="#555" stroke="#eee" stroke-width="1.2"/><path d="M10 14.500 L5 20" stroke="#eee" stroke-width="1.8"/><rect x="18.500" y="7.500" width="10" height="11" fill="#999" stroke="#ddd" stroke-width="1"/><path d="M19 11h9M19 14h9" stroke="#ccc" stroke-width="1"/></svg><div class="tl" style="top:21.5px;">AAHalf</div></div>
<div class="tb or" style="top:302.5px;height:37.5px;border-color:#0c0c0c;"><svg class="a" style="left:0.5px;top:0.5px" width="35" height="34" viewBox="0 0 35 34"><path d="M7 11.500h22M6 15.500h24M5 20h26 M18 11v9 M13 11.500L9 20 M23 11.500L27 20" stroke="#111" stroke-width="1.200" fill="none"/></svg><div class="tl" style="top:0.500px;font-weight:bold;font-size:7.5px;color:#fff;text-shadow:none;letter-spacing:0">Dynamic</div><div class="tl" style="top:22.0px;color:#111;text-shadow:none">Persp</div></div>
<div class="a" style="left:1316px;top:341px;font-size:5.5px;color:#999;letter-spacing:1px">&#8984; Y z</div>
<div class="tb " style="top:342.0px;height:37px;background:#2b2b2b;border-color:#232323;"><svg class="a" style="left:0.5px;top:0.5px" width="35" height="34" viewBox="0 0 35 34"><path d="M6 17.500h24" stroke="#eee" stroke-width="1.600"/><path d="M18 8v5 M15.500 11.500l2.500 3 2.500-3" stroke="#eee" stroke-width="1.300" fill="none"/></svg><div class="tl" style="top:20.0px;">Floor</div></div>
<div class="tb " style="top:381.0px;height:37.5px;background:#2b2b2b;border-color:#232323;"><svg class="a" style="left:0.5px;top:0.5px" width="35" height="34" viewBox="0 0 35 34"><path d="M7 17.500h22" stroke="#ddd" stroke-width="1" stroke-dasharray="2 1"/><path d="M18 12v9" stroke="#ddd" stroke-width="1"/><path d="M15 16h-7 M10.500 13.500l-3 2.500 3 2.500 M21 16h7 M25.500 13.500l3 2.500-3 2.500" stroke="#fff" stroke-width="1.400" fill="none"/></svg><div class="tl" style="top:-0.500px;font-weight:bold;font-size:7.5px;color:#eee;letter-spacing:0">Dynamic</div><div class="tl" style="top:22.5px;font-size:9px">L.Sym</div></div>
<div class="tb " style="top:419.5px;height:38px;background:#2b2b2b;border-color:#232323;"><svg class="a" style="left:0.5px;top:0.5px" width="35" height="34" viewBox="0 0 35 34"><rect x="10.500" y="19.500" width="11" height="6.500" rx="1" fill="#4a4a4a" stroke="#9c9c9c" stroke-width="1.100"/><path d="M10.500 21l-4-2v7l4-2z" fill="#8c8c8c"/><circle cx="13" cy="15.500" r="3.200" fill="#3c3c3c" stroke="#9c9c9c" stroke-width="1.100"/><rect x="17.500" y="14.500" width="11" height="9" rx="1" fill="#bdbdbd"/><path d="M20 14.500v-3a3 3 0 0 1 6 0v3" fill="none" stroke="#cfcfcf" stroke-width="1.600"/><circle cx="23" cy="19" r="1.300" fill="#555"/></svg><div class="tl" style="top:23.5px;"></div></div>
<div class="tb or" style="top:459.500px;height:18px;border-color:#0c0c0c"><svg class="a" style="left:-2px;top:0.500px" width="35" height="15" viewBox="0 0 35 15"><path d="M13 11.500a4.200 4.200 0 1 1 3.500-6.500" fill="none" stroke="#111" stroke-width="1.300"/><path d="M15 3l2.500 2.500-3.300 0.800z" fill="#111"/><text x="22.500" y="12" font-size="8" font-weight="bold" fill="#111" text-anchor="middle" font-family="Liberation Sans">XYZ</text></svg></div>
<svg class="a" style="left:1312px;top:481px" width="22" height="36" viewBox="0 0 22 36"><g fill="none" stroke="#ddd" stroke-width="1.100"><path d="M8 11.500a3.800 3.800 0 1 1 3.600-5"/><path d="M14 29.500a3.800 3.800 0 1 1 3.600-5"/></g><path d="M10.500 4.500l2 2.500-3 .5z M16.500 22.500l2 2.500-3 .5z" fill="#ddd"/><text x="10" y="13" font-size="7" font-weight="bold" fill="#eee" font-family="Liberation Sans">Y</text><text x="16" y="31" font-size="7" font-weight="bold" fill="#eee" font-family="Liberation Sans">Z</text></svg>
<div class="tb " style="top:518.5px;height:37px;"><svg class="a" style="left:0.5px;top:0.5px" width="35" height="34" viewBox="0 0 35 34"><defs><radialGradient id="fr"><stop offset="0" stop-color="#ddd"/><stop offset="1" stop-color="#666"/></radialGradient></defs><circle cx="18" cy="14.500" r="3" fill="url(#fr)"/><path d="M10.500 11.500v-3h3 M10.800 8.800l3 3 M25.500 11.500v-3h-3 M25.200 8.800l-3 3 M10.500 17.500v3h3 M10.800 20.200l3-3 M25.500 17.500v3h-3 M25.200 20.200l-3-3" stroke="#eee" stroke-width="1.100" fill="none"/></svg><div class="tl" style="top:21.5px;">Frame</div></div>
<div class="tb " style="top:558.5px;height:37px;"><svg class="a" style="left:0.5px;top:0.5px" width="35" height="34" viewBox="0 0 35 34"><defs><radialGradient id="mv" cx="0.4" cy="0.4"><stop offset="0" stop-color="#bbb"/><stop offset="1" stop-color="#555"/></radialGradient></defs><circle cx="21.500" cy="12" r="6" fill="url(#mv)"/><g transform="translate(0,4)"><path d="M8 17 C6 13 6 11 7.500 10.500 L9 13 L9 7.500 C9 6.500 10.500 6.500 10.500 7.500 L11 11 L11.500 6.500 C11.500 5.500 13 5.500 13 6.500 L13.300 11 L14.500 7 C14.800 6 16 6.300 15.800 7.300 L15 12 L17 9.500 C17.600 8.800 18.600 9.500 18 10.300 L15.500 15 C15 17.500 13.500 19 11 19 C9.500 19 8.500 18.200 8 17 Z" fill="#f4f4f4"/></g></svg><div class="tl" style="top:21.5px;">Move</div></div>
<div class="tb " style="top:597.5px;height:36.5px;"><svg class="a" style="left:0.5px;top:0.5px" width="35" height="33" viewBox="0 0 35 33"><defs><radialGradient id="z3" cx="0.4" cy="0.4"><stop offset="0" stop-color="#ccc"/><stop offset="1" stop-color="#555"/></radialGradient></defs><circle cx="21.500" cy="11" r="6.500" fill="url(#z3)"/><rect x="20" y="8.500" width="4" height="4" fill="none" stroke="#eee" stroke-width="0.8"/><circle cx="14" cy="11" r="4.500" fill="#555" stroke="#eee" stroke-width="1.2"/><path d="M10 14.500 L5 20" stroke="#eee" stroke-width="1.8"/></svg><div class="tl" style="top:22.0px;font-size:8px">Zoom3D</div></div>
<div class="tb " style="top:636.5px;height:37px;"><svg class="a" style="left:0.5px;top:0.5px" width="35" height="34" viewBox="0 0 35 34"><defs><radialGradient id="ro" cx="0.4" cy="0.4"><stop offset="0" stop-color="#bbb"/><stop offset="1" stop-color="#555"/></radialGradient></defs><circle cx="17" cy="15" r="5" fill="url(#ro)"/><rect x="15.500" y="13.500" width="3.500" height="3.500" fill="none" stroke="#eee" stroke-width="0.8"/><path d="M11.500 13a6 6 0 0 1 10.500-4 M22.500 20.500a5 5 0 0 0 2-8.500" fill="none" stroke="#fff" stroke-width="1.500"/><path d="M20 6.500l4 3.500-4.500 1z M25.500 21l-4.500 1.500 1-4z" fill="#fff"/></svg><div class="tl" style="top:21.5px;">Rotate</div></div>
<div class="tb " style="top:676.0px;height:37px;background:#2b2b2b;border-color:#232323;"><svg class="a" style="left:0.5px;top:0.5px" width="35" height="34" viewBox="0 0 35 34"><rect x="8.500" y="9.500" width="19" height="12" fill="none" stroke="#eee" stroke-width="1"/><path d="M15 9.500v12M21.500 9.500v12M8.500 13.500h19M8.500 17.500h19" stroke="#eee" stroke-width="0.9"/></svg><div class="tl" style="top:0.500px;font-weight:bold;font-size:7.5px;color:#eee;letter-spacing:0">Line Fill</div><div class="tl" style="top:22.5px;">PolyF</div></div>
<div class="tb " style="top:715.5px;height:37.5px;background:#2b2b2b;border-color:#232323;"><svg class="a" style="left:0.5px;top:0.5px" width="35" height="34" viewBox="0 0 35 34"><defs><radialGradient id="tp" cx="0.4" cy="0.4"><stop offset="0" stop-color="#888"/><stop offset="1" stop-color="#3a3a3a"/></radialGradient></defs><circle cx="16" cy="17" r="6.500" fill="url(#tp)"/><rect x="16.500" y="8.500" width="11" height="10" fill="rgba(90,90,90,.5)" stroke="#aaa" stroke-width="0.9"/></svg><div class="tl" style="top:22.5px;font-size:8px">Transp</div></div>
<div class="tb dor" style="top:754.5px;height:37px;"><svg class="a" style="left:0.5px;top:0.5px" width="35" height="34" viewBox="0 0 35 34"><circle cx="17.500" cy="16" r="7" fill="#86572a" stroke="#6b4520" stroke-width="1"/><path d="M11 22L24 8" stroke="#6b4520" stroke-width="1.300"/></svg><div class="tl" style="top:22.0px;color:#6b4520;text-shadow:none">Ghost</div></div>
<div class="tb " style="top:794.0px;height:37px;background:#2b2b2b;border-color:#232323;"><svg class="a" style="left:0.5px;top:0.5px" width="35" height="34" viewBox="0 0 35 34"><circle cx="13" cy="17" r="5" fill="#999"/><circle cx="23" cy="17" r="5" fill="#999"/><circle cx="18" cy="14" r="5.500" fill="#d8d8d8"/></svg><div class="tl" style="top:-0.500px;font-weight:bold;font-size:7.5px;color:#8a8a8a;letter-spacing:0;text-shadow:none">Dynamic</div><div class="tl" style="top:22.5px;">Solo</div></div>
<div class="tb " style="top:833.0px;height:37px;"><svg class="a" style="left:0.5px;top:0.5px" width="35" height="34" viewBox="0 0 35 34"><circle cx="18" cy="15" r="1" fill="#eee"/><path d="M9 7l6 5 M27 7l-6 5 M9 23l6-5 M27 23l-6-5 M8 15h5 M28 15h-5" stroke="#eee" stroke-width="1" stroke-dasharray="1.500 1"/><path d="M8 6l3.500 1-2.500 2.500z M28 6l-3.500 1 2.500 2.500z M8 24l3.500-1-2.500-2.500z M28 24l-3.500-1 2.500-2.500z M6 15l3-2v4z M30 15l-3-2v4z" fill="#fff"/></svg><div class="tl" style="top:21.5px;">Xpose</div></div>
<div class="a" style="left:1346px;top:381.500px;width:5.500px;height:41px;background:#333"></div><div class="a" style="left:1346px;top:445px;width:5.500px;height:41px;background:#333"></div>
<svg class="a" style="left:1345px;top:424px" width="8" height="20" viewBox="0 0 8 20"><path d="M1 1l5.500 4.300-5.500 4.300z" fill="#6e6e6e"/><path d="M6.500 10.500l-5.500 4.300 5.500 4.300z" fill="#6e6e6e"/></svg>

<div class="a" style="left:1373.5px;top:-10px;width:165px;height:361px;background:#2d2d2d;border:1.5px solid #1a1a1a;border-radius:0 0 7px 7px;box-shadow:inset 1px 0 0 #3a3a3a"></div>
<div class="btn" style="left:1378.5px;top:-5.2px;width:75.79999999999995px;height:17px;line-height:15px;">Save</div>
<div class="btn" style="left:1457.3px;top:-5.2px;width:75.70000000000005px;height:17px;line-height:15px;">Save Next</div>
<div class="btn" style="left:1378.5px;top:14.8px;width:154.5px;height:16.5px;line-height:14.5px;">Load Tools From Project</div>
<div class="btn" style="left:1378.5px;top:34.3px;width:75.79999999999995px;height:16.5px;line-height:14.5px;">Copy Tool</div>
<div class="btn" style="left:1457.3px;top:34.3px;width:75.70000000000005px;height:16.5px;line-height:14.5px;background:#2f2f2f;border-color:#262626;color:#5e5e5e">Paste Tool</div>
<div class="btn" style="left:1378.5px;top:53.8px;width:75.79999999999995px;height:16.5px;line-height:14.5px;">Import</div>
<div class="btn" style="left:1457.3px;top:53.8px;width:75.70000000000005px;height:16.5px;line-height:14.5px;">Export</div>
<div class="btn" style="left:1378.5px;top:73.5px;width:36.799999999999955px;height:16.5px;line-height:14.5px;">Clone</div>
<div class="btn" style="left:1417.8px;top:73.5px;width:115.20000000000005px;height:16.5px;line-height:14.5px;">Make PolyMesh3D</div>
<div class="btn" style="left:1378.5px;top:93.2px;width:36.799999999999955px;height:16.5px;line-height:14.5px;">GoZ</div>
<div class="btn" style="left:1417.8px;top:93.2px;width:36.5px;height:16.5px;line-height:14.5px;">All</div>
<div class="btn" style="left:1457.3px;top:93.2px;width:56.200000000000045px;height:16.5px;line-height:14.5px;">Visible</div>
<div class="btn" style="left:1516px;top:93.2px;width:17px;height:16.5px;line-height:14.5px;">R</div>
<div class="btn" style="left:1378.5px;top:113px;width:154.5px;height:16.5px;line-height:14.5px;">Lightbox<span style="font-size:11.500px;position:relative;top:0.500px;letter-spacing:-1.500px">&#9654;</span>Tools</div>
<div class="a" style="left:1381px;top:134px;color:#e0e0e0;font-size:10px">Skin_ZSphere_1. 50</div>
<div class="sl" style="left:1380px;top:147px;width:134px"></div><div class="kn" style="left:1499px;top:144px;width:12px"></div>
<div class="btn" style="left:1516px;top:133.5px;width:17px;height:15.5px;line-height:13.5px;">R</div>
<svg class="a" style="left:0;top:0" width="0" height="0"><defs>
<filter id="wh" x="0" y="0" width="100%" height="100%" color-interpolation-filters="sRGB"><feColorMatrix type="matrix" values="1.75 0 0 0 -0.05  0 1.75 0 0 -0.05  0 0 1.75 0 -0.05  0 0 0 1 0"/></filter>
<radialGradient id="sp3" cx="0.45" cy="0.35" r="0.65"><stop offset="0" stop-color="#f4f4f4"/><stop offset="0.6" stop-color="#cfcfcf"/><stop offset="1" stop-color="#8c8c8c"/></radialGradient>
<radialGradient id="zs" cx="0.45" cy="0.3" r="0.7"><stop offset="0" stop-color="#c01818"/><stop offset="1" stop-color="#7a0808"/></radialGradient>
<linearGradient id="sb" x1="0" y1="0" x2="1" y2="1"><stop offset="0" stop-color="#ffd050"/><stop offset="0.5" stop-color="#f09010"/><stop offset="1" stop-color="#b04a00"/></linearGradient>
<linearGradient id="pm" x1="0" y1="0" x2="1" y2="1"><stop offset="0" stop-color="#f0f0f0"/><stop offset="1" stop-color="#8a8a8a"/></linearGradient>
</defs></svg>
<div class="tt" style="left:1378.3px;top:151.3px;width:76.2px;height:77px;background:#3a3a3a;border-color:#151515;"><div class="a" style="left:0;bottom:0;width:100%;height:13px;background:#2c2c2c"></div><div class="ttl">Skin_ZSphere_1</div></div>
<svg class="a" style="left:1393.7px;top:152px" width="41.6" height="62" viewBox="458 135 560 717" preserveAspectRatio="none"><use href="#fig" filter="url(#wh)"/></svg>
<div class="tt" style="left:1457.5px;top:151.3px;width:75.5px;height:37px;"><svg class="a" style="left:0;top:0" width="75" height="37" viewBox="0 0 75 37"><circle cx="37.500" cy="13" r="12" fill="url(#sp3)"/></svg><div class="ttl">Sphere3D</div></div>
<div class="tt" style="left:1457.5px;top:190.8px;width:75.5px;height:37px;"><svg class="a" style="left:0;top:0" width="75" height="37" viewBox="0 0 75 37"><path d="M45 8.500 C42 2 30 3 30 10 C30 17 45 15 45 22 C45 29 31 30 28 23" fill="none" stroke="url(#sb)" stroke-width="5.500" stroke-linecap="round"/></svg><div class="ttl">SimpleBrush</div></div>
<div class="tt" style="left:1378.3px;top:231px;width:76.2px;height:36px;"><svg class="a" style="left:0;top:0" width="76" height="36" viewBox="0 0 76 36"><circle cx="37.500" cy="14" r="11.500" fill="url(#zs)"/><path d="M26.500 17 A11.500 11.500 0 0 0 48.500 16 Q37 22 26.500 17Z" fill="#e81010"/></svg><div class="ttl">ZSphere</div></div>
<div class="tt" style="left:1457.5px;top:231px;width:75.5px;height:36px;background:#3a3a3a;border-color:#151515;"><div class="ttl">Skin_ZSphere_1</div></div>
<svg class="a" style="left:1484.9px;top:232px" width="20.2" height="30" viewBox="458 135 560 717" preserveAspectRatio="none"><use href="#fig" filter="url(#wh)"/></svg>
<div class="tt" style="left:1378.3px;top:270.3px;width:76.2px;height:36px;"><svg class="a" style="left:0;top:0" width="76" height="36" viewBox="0 0 76 36"><path d="M37 2 L40.500 11 L50 8 L44 15.500 L50 22 L41 20.500 L38 28 L35 20 L26 23 L31.500 15.500 L25 9 L34 11 Z" fill="url(#pm)"/></svg><div class="ttl">PolyMesh3D</div></div>
<div class="tt" style="left:1457.5px;top:270.3px;width:75.5px;height:36px;"><div class="ttl">Skin_ZSphere_2</div></div>
<svg class="a" style="left:1484.9px;top:271px" width="20.2" height="30" viewBox="458 135 560 717" preserveAspectRatio="none"><use href="#fig" filter="url(#wh)"/></svg>
<div class="tt" style="left:1378.3px;top:309.5px;width:76.2px;height:36.5px;"><div class="ttl">ZSphere_1</div></div>
<svg class="a" style="left:1405.9px;top:310px" width="20.2" height="30" viewBox="458 135 560 717" preserveAspectRatio="none"><use href="#fig" filter="url(#wh)"/></svg>
<div class="sm" style="top:361.8px">Subtool</div>
<div class="sm" style="top:381.5px">Geometry</div>
<div class="sm" style="top:401.1px">ArrayMesh</div>
<div class="sm" style="top:420.8px">NanoMesh</div>
<div class="sm" style="top:440.5px">Slime Bridge</div>
<div class="sm" style="top:460.2px">Thick Skin</div>
<div class="sm" style="top:479.8px">Layers</div>
<div class="sm" style="top:499.5px">FiberMesh</div>
<div class="sm" style="top:519.2px">Geometry HD</div>
<div class="sm" style="top:538.8px">Preview</div>
<div class="sm" style="top:558.5px">Surface</div>
<div class="sm" style="top:578.2px">Deformation</div>
<div class="sm" style="top:597.8px">Masking</div>
<div class="sm" style="top:617.5px">Visibility</div>
<div class="sm" style="top:637.2px">Polygroups</div>
<div class="sm" style="top:656.9px">Contact</div>
<div class="sm" style="top:676.5px">Morph Target</div>
<div class="sm" style="top:696.2px">Polypaint</div>
<div class="sm" style="top:715.9px">UV Map</div>
<div class="sm" style="top:735.5px">Texture Map</div>
<div class="sm" style="top:755.2px">Displacement Map</div>
<div class="sm" style="top:774.9px">Normal Map</div>
<div class="sm" style="top:794.5px">Vector Displacement Map</div>
<div class="sm" style="top:814.2px">Display Properties</div>
<div class="a" style="left:637px;top:858px;width:41px;height:6px;background:#555;border-top:1px solid #777"></div><div class="a" style="left:701px;top:858px;width:41px;height:6px;background:#555;border-top:1px solid #777"></div>
<svg class="a" style="left:681px;top:857px" width="19" height="8" viewBox="0 0 19 8"><path d="M0.500 7.500L5 1l4.500 6.500z" fill="#ddd"/><path d="M9.500 1h9L14 7.500z" fill="#ddd"/></svg>

</body></html>
